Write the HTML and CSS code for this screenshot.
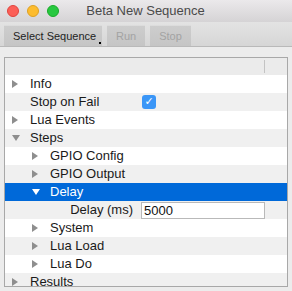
FILE: index.html
```
<!DOCTYPE html>
<html lang="en">
<head>
    <meta charset="UTF-8">
    <title>Beta New Sequence</title>
    <link rel="stylesheet" href="styles.css">
</head>
<body>
    <div class="window">
        <div class="titlebar">
            <div class="lights">
                <span class="light red"></span>
                <span class="light yellow"></span>
                <span class="light green"></span>
            </div>
            <div class="title">Beta New Sequence</div>
        </div>

        <div class="toolbar">
            <button class="tool-btn menu-btn">Select Sequence<span class="menu-dot"></span></button>
            <button class="tool-btn" disabled>Run</button>
            <button class="tool-btn" disabled>Stop</button>
        </div>

        <div class="content">
            <div class="tree">
                <div class="tree-header">
                    <div></div>
                    <div></div>
                    <div class="col-sep"></div>
                </div>

                <div class="row">
                    <div class="name"><span class="arrow closed"></span>Info</div>
                    <div class="value"></div>
                </div>
                <div class="row odd">
                    <div class="name"><span class="arrow none"></span>Stop on Fail</div>
                    <div class="value"><span class="checkbox">&#10003;</span></div>
                </div>
                <div class="row">
                    <div class="name"><span class="arrow closed"></span>Lua Events</div>
                    <div class="value"></div>
                </div>
                <div class="row odd">
                    <div class="name"><span class="arrow open"></span>Steps</div>
                    <div class="value"></div>
                </div>
                <div class="row">
                    <div class="name level-1"><span class="arrow closed"></span>GPIO Config</div>
                    <div class="value"></div>
                </div>
                <div class="row odd">
                    <div class="name level-1"><span class="arrow closed"></span>GPIO Output</div>
                    <div class="value"></div>
                </div>
                <div class="row selected">
                    <div class="name level-1"><span class="arrow open"></span>Delay</div>
                    <div class="value"></div>
                </div>
                <div class="row odd">
                    <div class="name label">Delay (ms)</div>
                    <div class="value"><input class="field" type="text" value="5000"></div>
                </div>
                <div class="row">
                    <div class="name level-1"><span class="arrow closed"></span>System</div>
                    <div class="value"></div>
                </div>
                <div class="row odd">
                    <div class="name level-1"><span class="arrow closed"></span>Lua Load</div>
                    <div class="value"></div>
                </div>
                <div class="row">
                    <div class="name level-1"><span class="arrow closed"></span>Lua Do</div>
                    <div class="value"></div>
                </div>
                <div class="row odd">
                    <div class="name"><span class="arrow closed"></span>Results</div>
                    <div class="value"></div>
                </div>
            </div>
        </div>
    </div>
</body>
</html>
```

FILE: styles.css
```
* {
    margin: 0;
    padding: 0;
    box-sizing: border-box;
}

body {
    width: 292px;
    height: 291px;
    overflow: hidden;
    background: #ececec;
    font-family: 'Liberation Sans', Arial, sans-serif;
    font-size: 13px;
    color: #1a1a1a;
}

.window {
    display: flex;
    flex-direction: column;
    height: 291px;
}

/* Title bar */
.titlebar {
    height: 22px;
    display: flex;
    align-items: center;
    position: relative;
    background: linear-gradient(#ebe9eb, #d5d3d5);
}

.lights {
    display: flex;
    gap: 8px;
    padding-left: 7px;
}

.light {
    width: 12px;
    height: 12px;
    border-radius: 50%;
}

.red { background: #fc5f57; border: 1px solid #e0443e; }
.yellow { background: #fdbc2e; border: 1px solid #dea123; }
.green { background: #28c840; border: 1px solid #1aab29; }

.title {
    flex: 1;
    text-align: center;
    padding-right: 60px;
    color: #4a4a4a;
    font-size: 13px;
    line-height: 22px;
}

/* Toolbar */
.toolbar {
    height: 25px;
    display: flex;
    align-items: flex-start;
    gap: 5px;
    padding: 3px 0 0 4px;
    background: linear-gradient(#e3e3e3, #d6d6d6);
    border-bottom: 1px solid #b9b9b9;
}

.tool-btn {
    position: relative;
    height: 21px;
    padding: 0 9px;
    border: none;
    border-top: 1px solid #dcdcdc;
    background: linear-gradient(#cdcdcd, #c5c5c5);
    font-family: 'Liberation Sans', Arial, sans-serif;
    font-size: 11px;
    color: #1e1e1e;
    white-space: nowrap;
}

.tool-btn:disabled {
    color: #a3a3a3;
}

.menu-btn {
    width: 98px;
    padding: 0 7px 0 9px;
    text-align: left;
}

.menu-dot {
    position: absolute;
    right: 1px;
    bottom: 2px;
    width: 2px;
    height: 2px;
    background: #000;
}

/* Tree */
.content {
    flex: 1;
    padding: 10px 4px 4px 4px;
}

.tree {
    height: 230px;
    overflow: hidden;
    border: 1px solid #a8a8a8;
    background: #fff;
}

.tree-header,
.row {
    display: grid;
    grid-template-columns: 135px 124px 1fr;
}

.tree-header {
    height: 17px;
    background: #ebebeb;
}

.col-sep {
    width: 1px;
    height: 13px;
    margin-top: 2px;
    background: #c3c3c3;
}

.row {
    height: 18px;
    line-height: 18px;
    background: #fff;
}

.row.odd {
    background: #f0f0f0;
}

.row.selected {
    background: #0069d9;
    color: #fff;
}

.name {
    display: flex;
    align-items: center;
    padding-left: 7px;
    white-space: nowrap;
    grid-column: 1;
}

.name.level-1 {
    padding-left: 27px;
}

.name.label {
    justify-content: flex-end;
    padding-right: 7px;
}

.row .value {
    grid-column: 2 / 4;
    display: flex;
    align-items: center;
}

.arrow {
    width: 18px;
    height: 8px;
    flex-shrink: 0;
    position: relative;
}

.arrow::before {
    content: "";
    position: absolute;
    left: 0;
    top: 0;
}

.arrow.closed::before {
    border-left: 6px solid #8e8e8e;
    border-top: 4px solid transparent;
    border-bottom: 4px solid transparent;
}

.arrow.open::before {
    top: 1px;
    border-top: 6px solid #8e8e8e;
    border-left: 4px solid transparent;
    border-right: 4px solid transparent;
}

.selected .arrow.open::before {
    border-top-color: #fff;
}

.checkbox {
    width: 14px;
    height: 14px;
    margin-left: 2px;
    border-radius: 3px;
    background: #3a96f7;
    color: #fff;
    font-size: 11px;
    line-height: 14px;
    text-align: center;
    font-family: 'DejaVu Sans', sans-serif;
}

.field {
    width: 124px;
    height: 17px;
    margin-left: 1px;
    padding-left: 2px;
    border: 1px solid #b9b9b9;
    background: #fff;
    font-family: 'Liberation Sans', Arial, sans-serif;
    font-size: 13px;
    color: #111;
    outline: none;
}
```
